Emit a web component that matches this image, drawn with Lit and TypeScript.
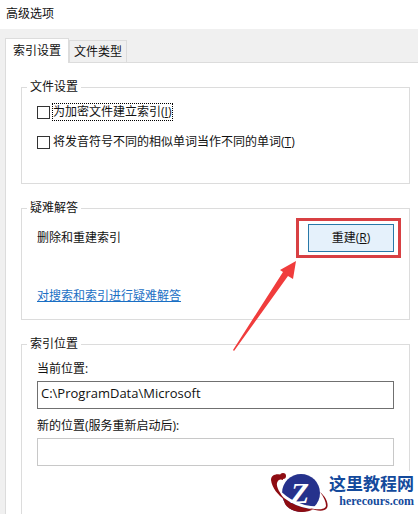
import { LitElement, html, css, svg } from "lit";
import { customElement } from "lit/decorators.js";

const arrow = svg`
  <svg class="arrow" viewBox="0 0 64 90" aria-hidden="true">
    <path d="M63 0 L47 9 L50 11 L0 89 L1 90 L55 15 L60 18 Z" fill="#f03c3c" />
  </svg>`;

const emblem = svg`
  <svg class="emblem" viewBox="0 0 58 43" aria-hidden="true">
    <circle cx="30" cy="22" r="19" fill="#26328c" />
    <path d="M11 24 C17 31 27 37 43 38 C34 43 20 42 14 33 Z" fill="#8e0c12" />
    <path d="M3 14 C9 24 25 37 47 37" fill="none" stroke="#fff" stroke-width="3" />
    <path d="M12 4 C5 2 0 4 0 9 C1 17 7 24 14 29 C9 22 5 16 6 12 C7 8 10 8 12 9 Z" fill="#8e0c12" />
    <circle cx="12" cy="5" r="3" fill="#8e0c12" />
    <path d="M49 21 C55 26 58 33 56 37 C53 41 46 40 38 37 C47 39 54 39 55 35 C55 31 53 26 49 21 Z" fill="#8e0c12" />
    <text x="29" y="32" text-anchor="middle" class="letter">Z</text>
  </svg>`;

@customElement("app-root")
export class AppRoot extends LitElement {
  static styles = css`
    :host {
      display: block;
      font: 12px/16px "Open Sans", "Noto Sans CJK SC", sans-serif;
      color: #111;
    }
    * { box-sizing: border-box; }
    .window {
      position: relative;
      display: flex;
      flex-direction: column;
      min-height: 100vh;
      background: #f0f0f0;
      overflow: hidden;
    }
    .title {
      margin: 0;
      padding: 6px 6px 7px;
      background: #fff;
      font: inherit;
    }
    .tabs {
      display: flex;
      align-items: flex-end;
      height: 33px;
      padding-left: 5px;
    }
    .tab {
      height: 22px;
      padding: 0 4px;
      border: 1px solid #dcdcdc;
      border-bottom: 0;
      background: #f0f0f0;
      color: inherit;
      font: inherit;
    }
    .tab.active {
      z-index: 1;
      height: 25px;
      margin-bottom: -1px;
      padding: 0 7px;
      background: #fff;
    }
    .panel {
      display: flex;
      flex: 1;
      flex-direction: column;
      gap: 16px;
      margin-left: 5px;
      padding: 16px 8px 0 15px;
      border: 1px solid #dcdcdc;
      border-width: 1px 0 0 1px;
      background: #fff;
    }
    .group {
      min-width: 0;
      margin: 0;
      padding: 8px 15px 15px;
      border: 1px solid #dcdcdc;
    }
    .group.files { padding-bottom: 32px; }
    .group.location {
      flex: 1;
      padding-top: 9px;
      padding-bottom: 24px;
      border-bottom: 0;
    }
    legend {
      margin-left: -10px;
      padding: 0 3px;
    }
    .checks {
      display: grid;
      gap: 12px;
      justify-items: start;
    }
    .check {
      display: flex;
      align-items: center;
      gap: 2px;
    }
    .check input {
      appearance: none;
      width: 13px;
      height: 13px;
      margin: 0;
      border: 1px solid #333;
      background: #fff;
    }
    .check span {
      padding-right: 1px;
      border: 1px dotted transparent;
    }
    .check .focused { border-color: #000; }
    .row {
      display: flex;
      align-items: center;
      justify-content: space-between;
      margin-bottom: 36px;
    }
    .action {
      position: relative;
      display: flex;
    }
    .action::before {
      content: "";
      position: absolute;
      inset: -6px -7px -6px -12px;
      border: 3px solid #d84043;
      pointer-events: none;
    }
    .rebuild {
      width: 86px;
      height: 28px;
      padding: 0;
      border: 1px solid #2878a8;
      background: #e5f1fb;
      color: inherit;
      font: inherit;
    }
    .arrow {
      position: absolute;
      top: 37px;
      right: 97px;
      width: 64px;
      height: 90px;
      pointer-events: none;
    }
    .link {
      display: block;
      width: max-content;
      color: #1a6fc4;
    }
    .field {
      display: grid;
      gap: 4px;
      margin-bottom: 9px;
    }
    .field input {
      width: 100%;
      height: 28px;
      padding: 0 3px 4px;
      border: 1px solid #c8c8c8;
      border-radius: 0;
      background: #fff;
      color: inherit;
      font: 13px/16px "Open Sans", "Noto Sans CJK SC", sans-serif;
      outline: 0;
    }
    .field .current { border-color: #707070; }
    .brand {
      position: absolute;
      right: 0;
      bottom: 0;
      display: flex;
      padding-right: 4px;
      background: #fff;
    }
    .emblem {
      width: 58px;
      height: 43px;
    }
    .letter {
      fill: #fff;
      font: italic bold 30px "Liberation Serif", serif;
    }
    .names {
      display: flex;
      flex-direction: column;
      align-items: flex-end;
      padding-top: 2px;
      color: #144a9c;
      font: bold 12px/16px "Liberation Serif", serif;
    }
    .names strong {
      font: bold 17px/20px "Noto Sans CJK SC", sans-serif;
    }
  `;

  render() {
    return html`
      <main class="window">
        <h1 class="title">高级选项</h1>
        <div class="tabs" role="tablist">
          <button class="tab active" role="tab" aria-selected="true">索引设置</button>
          <button class="tab" role="tab" aria-selected="false">文件类型</button>
        </div>
        <div class="panel" role="tabpanel">
          <fieldset class="group files">
            <legend>文件设置</legend>
            <div class="checks">
              <label class="check">
                <input type="checkbox" />
                <span class="focused">为加密文件建立索引(<u>I</u>)</span>
              </label>
              <label class="check">
                <input type="checkbox" />
                <span>将发音符号不同的相似单词当作不同的单词(<u>T</u>)</span>
              </label>
            </div>
          </fieldset>
          <fieldset class="group">
            <legend>疑难解答</legend>
            <div class="row">
              <span>删除和重建索引</span>
              <div class="action">
                <button class="rebuild">重建(<u>R</u>)</button>
                ${arrow}
              </div>
            </div>
            <a class="link" href="#">对搜索和索引进行疑难解答</a>
          </fieldset>
          <fieldset class="group location">
            <legend>索引位置</legend>
            <label class="field">
              当前位置:
              <input class="current" type="text" readonly .value=${"C:\\ProgramData\\Microsoft"} />
            </label>
            <label class="field">
              新的位置(服务重新启动后):
              <input type="text" readonly />
            </label>
          </fieldset>
        </div>
        <div class="brand">
          ${emblem}
          <div class="names">
            <strong>这里教程网</strong>
            <span>herecours.com</span>
          </div>
        </div>
      </main>
    `;
  }
}
